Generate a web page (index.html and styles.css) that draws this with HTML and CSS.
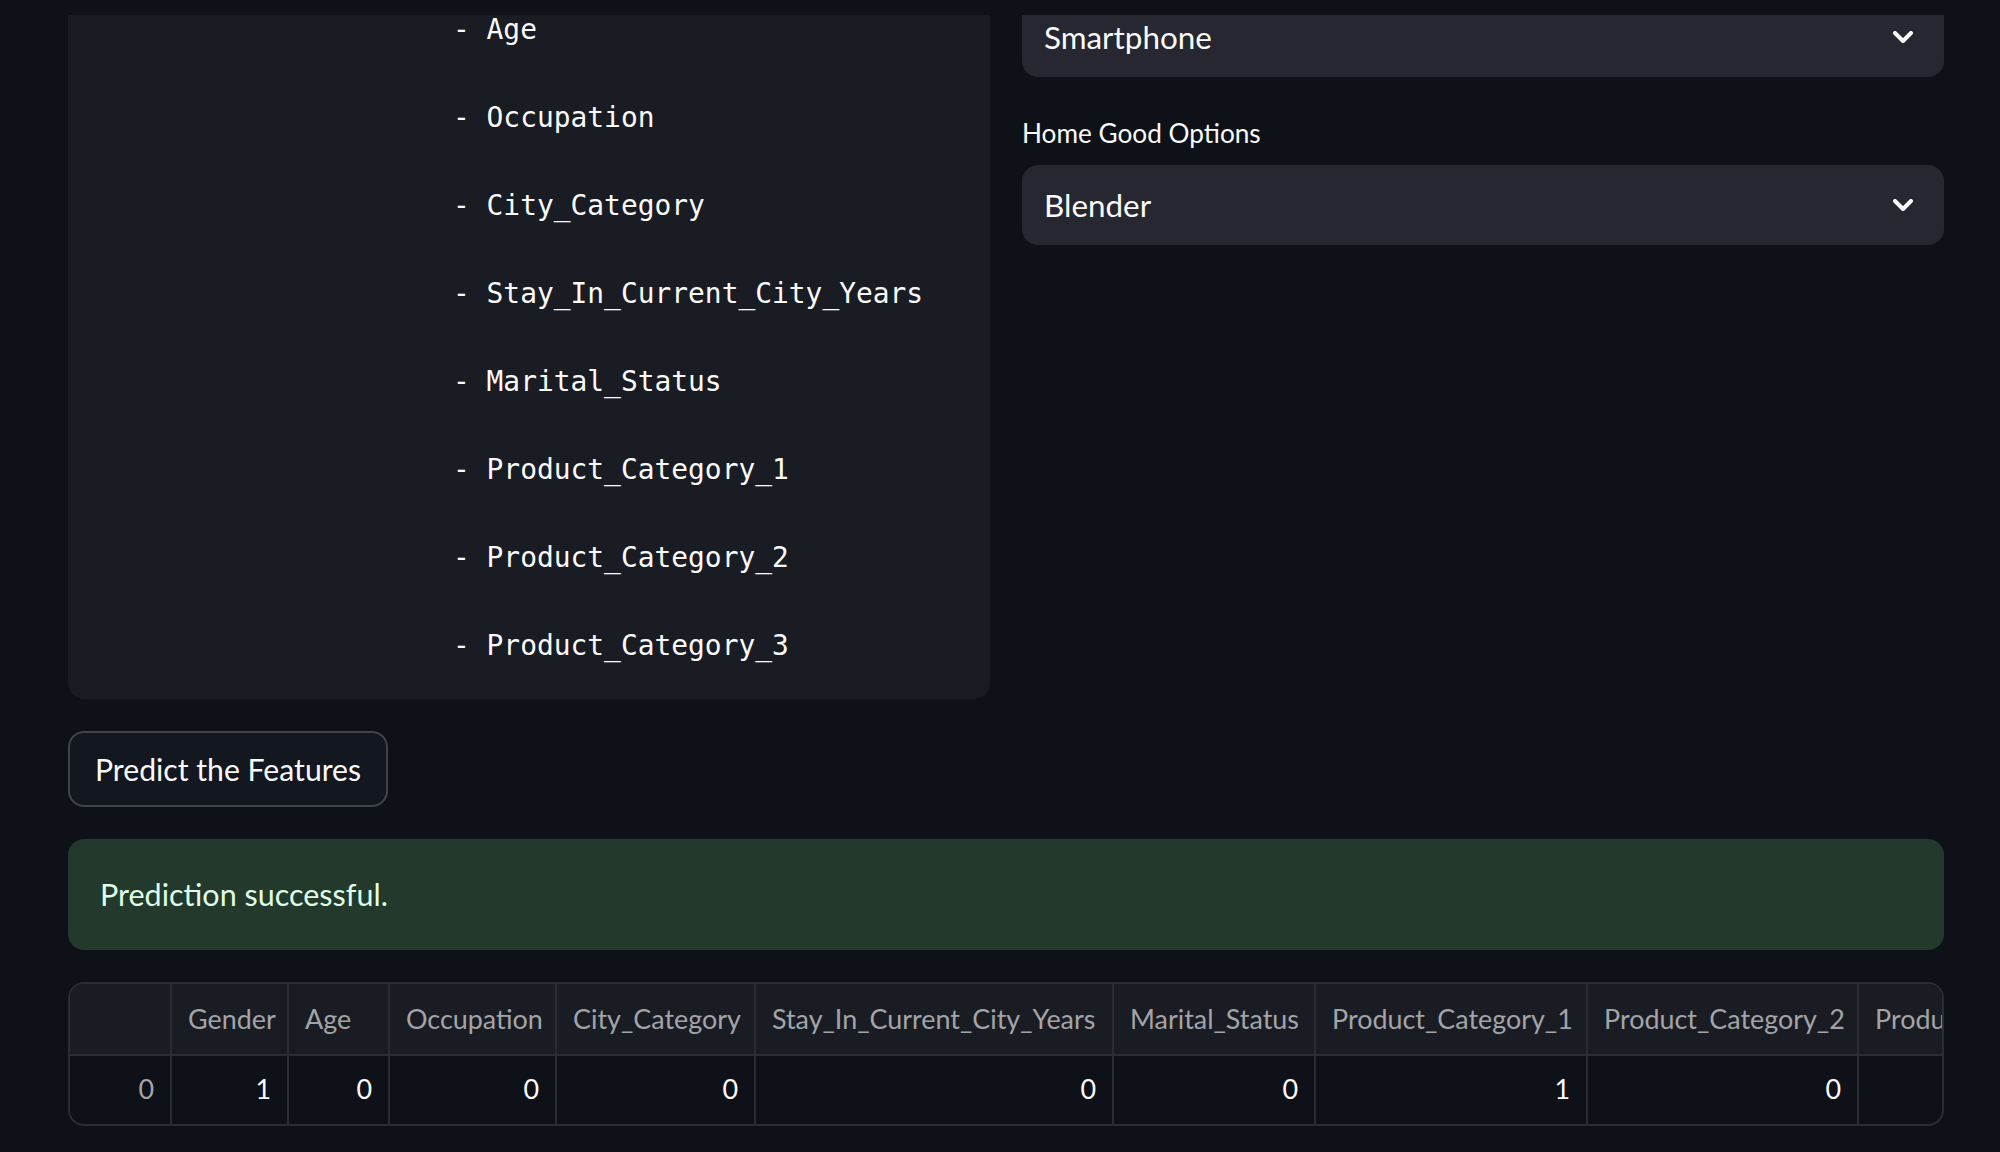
FILE: index.html
```html
<!DOCTYPE html>
<html lang="en">
<head>
<meta charset="utf-8">
<title>Prediction</title>
<link rel="stylesheet" href="styles.css">
</head>
<body>
<header class="top-bar"></header>
<main class="main">
  <div class="columns">
    <div class="col">
      <pre class="code-block"><code>- Age

- Occupation

- City_Category

- Stay_In_Current_City_Years

- Marital_Status

- Product_Category_1

- Product_Category_2

- Product_Category_3</code></pre>
    </div>
    <div class="col col-right">
      <div class="select">
        <span class="select-value">Smartphone</span>
        <svg class="chevron" width="20" height="12" viewBox="0 0 20 12"><polyline points="2,2 10,10 18,2" fill="none" stroke="#fafafa" stroke-width="4" stroke-linecap="round" stroke-linejoin="round"/></svg>
      </div>
      <div class="field">
        <div class="field-label">Home Good Options</div>
        <div class="select">
          <span class="select-value">Blender</span>
          <svg class="chevron" width="20" height="12" viewBox="0 0 20 12"><polyline points="2,2 10,10 18,2" fill="none" stroke="#fafafa" stroke-width="4" stroke-linecap="round" stroke-linejoin="round"/></svg>
        </div>
      </div>
    </div>
  </div>
  <button class="btn">Predict the Features</button>
  <div class="alert">Prediction successful.</div>
  <div class="table-wrap">
    <table class="df">
      <colgroup>
        <col class="c-idx"><col class="c-gender"><col class="c-age"><col class="c-occ"><col class="c-city"><col class="c-stay"><col class="c-marital"><col class="c-pc1"><col class="c-pc2"><col class="c-pc3">
      </colgroup>
      <thead>
        <tr><th></th><th>Gender</th><th>Age</th><th>Occupation</th><th>City_Category</th><th>Stay_In_Current_City_Years</th><th>Marital_Status</th><th>Product_Category_1</th><th>Product_Category_2</th><th>Product_Category_3</th></tr>
      </thead>
      <tbody>
        <tr><td class="idx">0</td><td>1</td><td>0</td><td>0</td><td>0</td><td>0</td><td>0</td><td>1</td><td>0</td><td>0</td></tr>
      </tbody>
    </table>
  </div>
</main>
</body>
</html>
```

FILE: styles.css
```css
html, body {
  margin: 0;
  padding: 0;
}

body {
  background: #0e1117;
  color: #fafafa;
  font-family: "Source Sans Pro", "Lato", sans-serif;
  height: 1152px;
  overflow: hidden;
}

.top-bar {
  position: fixed;
  top: 0;
  left: 0;
  right: 0;
  height: 15px;
  background: #0e1117;
  z-index: 10;
}

.main {
  display: flex;
  flex-direction: column;
  align-items: flex-start;
  gap: 32px;
  width: 1876px;
  margin: -25px 0 0 68px;
}

.columns {
  display: grid;
  grid-template-columns: 922px 922px;
  column-gap: 32px;
  width: 100%;
}

.code-block {
  margin: 0;
  background: #1a1c24;
  border-radius: 16px;
  padding: 33px 32px 31px 385px;
  font-family: "DejaVu Sans Mono", "Liberation Mono", monospace;
  font-size: 27.9px;
  line-height: 44px;
  color: #fafafa;
  white-space: pre;
}

.col-right {
  display: flex;
  flex-direction: column;
  gap: 32px;
  padding-top: 22px;
}

.select {
  box-sizing: border-box;
  height: 80px;
  background: #262730;
  border-radius: 16px;
  display: flex;
  align-items: center;
  justify-content: space-between;
  padding: 0 31px 0 22px;
  font-size: 31.4px;
}

.chevron {
  display: block;
}

.field-label {
  height: 48px;
  margin-bottom: 8px;
  display: flex;
  align-items: center;
  font-size: 26.2px;
}

.btn {
  box-sizing: border-box;
  height: 76px;
  padding: 0 25px;
  border: 2px solid rgba(250, 250, 250, 0.2);
  background: #131720;
  border-radius: 16px;
  color: #fafafa;
  font-family: inherit;
  font-size: 30.2px;
}

.alert {
  box-sizing: border-box;
  width: 100%;
  padding: 32px;
  background: #23392b;
  color: #dffde9;
  border-radius: 16px;
  font-size: 30.5px;
  line-height: 47px;
}

.table-wrap {
  box-sizing: border-box;
  width: 100%;
  border: 2px solid #2b2d34;
  border-radius: 16px;
  overflow: hidden;
}

.df {
  border-collapse: separate;
  border-spacing: 0;
  table-layout: fixed;
  width: 2061px;
}

.c-idx { width: 102px; }
.c-gender { width: 117px; }
.c-age { width: 101px; }
.c-occ { width: 167px; }
.c-city { width: 199px; }
.c-stay { width: 358px; }
.c-marital { width: 202px; }
.c-pc1 { width: 272px; }
.c-pc2 { width: 271px; }
.c-pc3 { width: 272px; }

.df th,
.df td {
  box-sizing: border-box;
  border-right: 2px solid #2b2d34;
  padding: 0 16px;
  font-size: 26.9px;
  white-space: nowrap;
  overflow: hidden;
}

.df th {
  height: 72px;
  padding-bottom: 2px;
  border-bottom: 2px solid #2b2d34;
  background: #1a1c24;
  color: #a3a4a8;
  text-align: left;
  font-weight: 400;
}

.df td {
  height: 68px;
  padding-bottom: 3px;
  text-align: right;
  color: #fafafa;
}

.df td.idx {
  color: #a3a4a8;
}
```
